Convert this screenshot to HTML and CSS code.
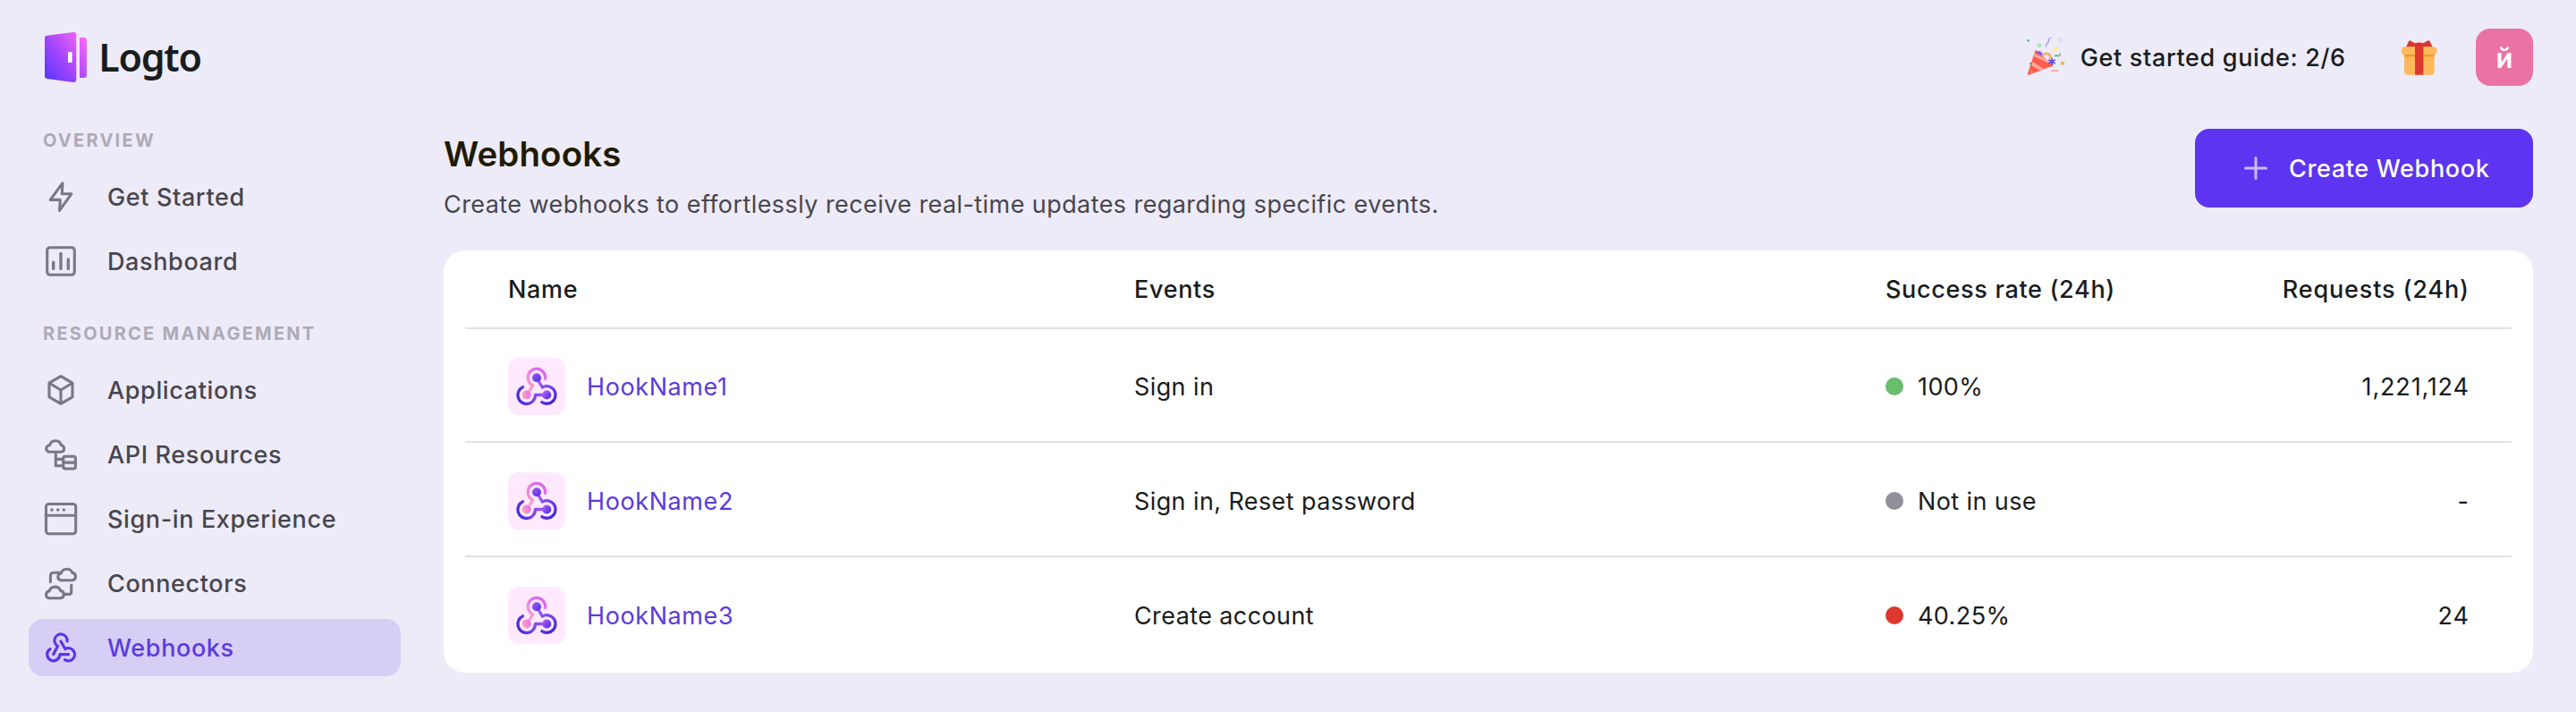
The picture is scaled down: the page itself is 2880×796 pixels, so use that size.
FILE: index.html
```html
<!DOCTYPE html>
<html lang="en">
<head>
<meta charset="utf-8">
<title>Logto – Webhooks</title>
<link rel="stylesheet" href="styles.css">
</head>
<body>
<svg class="defs" width="0" height="0" aria-hidden="true">
  <defs>
    <linearGradient id="hookPink" gradientUnits="userSpaceOnUse" x1="42" y1="14" x2="24" y2="40"><stop offset="0" stop-color="#d75ff0"/><stop offset=".5" stop-color="#ec86dd"/><stop offset="1" stop-color="#ffa8b8"/></linearGradient>
    <linearGradient id="hookLeft" gradientUnits="userSpaceOnUse" x1="12" y1="46" x2="42" y2="38"><stop offset="0" stop-color="#4a2bdc"/><stop offset="1" stop-color="#a85df2"/></linearGradient>
    <linearGradient id="hookRight" gradientUnits="userSpaceOnUse" x1="52" y1="48" x2="34" y2="26"><stop offset="0" stop-color="#4526d6"/><stop offset="1" stop-color="#a35cf0"/></linearGradient>
    <linearGradient id="dotTop" x1="0" y1="0" x2="1" y2="1"><stop offset="0" stop-color="#a25af5"/><stop offset="1" stop-color="#5130ea"/></linearGradient>
    <linearGradient id="dotLeft" x1="0" y1=".7" x2="1" y2=".3"><stop offset="0" stop-color="#ffa7b4"/><stop offset="1" stop-color="#e76bf0"/></linearGradient>
    <linearGradient id="dotRight" x1="0" y1="0" x2="1" y2="1"><stop offset="0" stop-color="#b765f7"/><stop offset="1" stop-color="#4a2be0"/></linearGradient>
    <symbol id="hook" viewBox="0 0 64 64">
      <g fill="none" stroke-width="3.3" stroke-linecap="round" stroke-linejoin="round">
        <path stroke="url(#hookPink)" d="M41.6 23.6A9.8 9.8 0 1 0 27.6 31L22.5 39.5"/>
        <path stroke="url(#hookLeft)" d="M16.6 32.8A9.8 9.8 0 1 0 30.5 41.5H41"/>
        <path stroke="url(#hookRight)" d="M37.8 49.6A9.8 9.8 0 1 0 38.3 33L33 24"/>
      </g>
      <circle cx="32" cy="22.3" r="5" fill="url(#dotTop)"/>
      <circle cx="20.7" cy="41.5" r="5" fill="url(#dotLeft)"/>
      <circle cx="43.3" cy="41.5" r="5" fill="url(#dotRight)"/>
    </symbol>
  </defs>
</svg>

<header class="topbar">
  <a class="logo">
    <svg class="logo-mark" viewBox="0 0 142 168">
      <defs><linearGradient id="door" gradientUnits="userSpaceOnUse" x1="0" y1="140" x2="140" y2="34"><stop offset="0" stop-color="#6038ff"/><stop offset=".45" stop-color="#a446fb"/><stop offset="1" stop-color="#f566f5"/></linearGradient></defs>
      <path fill="url(#door)" d="M7 11L96 0Q106-1 106 9V159Q106 169 96 168L7 156Q0 155 0 148V19Q0 12 7 11Z"/>
      <path fill="#fff" d="M80 66H90Q92 66 92 68V100Q92 102 90 102H80Q78 102 78 100V68Q78 66 80 66Z"/>
      <path fill="url(#door)" d="M117 18H132Q141 18 141 27V144Q141 153 132 153H117Z"/>
    </svg>
    <span class="logo-text">Logto</span>
  </a>
  <div class="actions">
    <svg class="party" viewBox="45 25 135 140">
      <path fill="#ff5c4d" d="M77 75L138 128L56 159Q50 160 51 154Z"/>
      <g fill="#ffa79c"><path d="M74 86L136 119L138 128L128 132L71 101Z"/><path d="M67 115L106 140L94 145L64 128Z"/><path d="M59 142L75 152L67 155L56 156Z" opacity=".35"/></g>
      <path fill="#ff5c4d" d="M71 97L130 124L133 130L126 133L69 108Z"/>
      <path fill="none" stroke="#f9b25c" stroke-width="8" d="M103 94Q108 86 118 88Q129 92 127 105"/>
      <path fill="#7a5cf0" d="M82 79Q98 77 103 94Q92 93 82 84Z"/>
      <path stroke="#5f48e8" stroke-width="5" d="M132 102V127M121 108L143 121M143 108L121 121"/>
      <path fill="none" stroke="#a79cf8" stroke-width="4" d="M130 35Q120 36 121 46Q122 52 116 53Q111 56 113 65"/>
      <path fill="none" stroke="#4caf5c" stroke-width="4" d="M141 97Q147 92 151 95Q158 98 161 87"/>
      <path fill="none" stroke="#f58c7c" stroke-width="3.5" d="M131 148Q136 140 141 146Q147 140 153 148"/>
      <circle cx="90" cy="60" r="5" fill="none" stroke="#6fdc83" stroke-width="3"/>
      <circle cx="162" cy="42" r="5" fill="none" stroke="#c8c6d4" stroke-width="2.5"/>
      <circle cx="53" cy="44" r="4" fill="#4fb467"/><circle cx="61" cy="122" r="4" fill="#5bb36a"/>
      <circle cx="144" cy="72" r="6.5" fill="#fff07a"/><circle cx="168" cy="120" r="6.5" fill="#fdae4b"/>
    </svg>
    <span class="guide">Get started guide: 2/6</span>
    <svg class="gift" viewBox="70 55 124 122">
      <path fill="#d9362f" d="M88 81L97 61Q100 57 105 61L118 68Q131 63 146 68L159 60Q165 57 168 61L177 81Z"/>
      <path fill="#ffb95c" d="M82 104H183V162Q183 174 171 174H94Q82 174 82 162Z"/>
      <rect x="72" y="80" width="120" height="28" rx="13" fill="#ffb95c"/>
      <path fill="#eb9918" d="M82 107H183V113H82Z"/>
      <path fill="#de3730" d="M118 74H146V174H118Z"/>
    </svg>
    <div class="avatar">й</div>
  </div>
</header>

<div class="layout">
  <nav class="sidebar">
    <div class="section">
      <div class="label">OVERVIEW</div>
      <a class="item"><svg viewBox="0 0 40 40"><path d="M22 4.7L8.3 23.4H19.3L18.5 35.4L31.8 16.8H21.3Z"/></svg><span>Get Started</span></a>
      <a class="item"><svg viewBox="0 0 40 40"><rect x="4.7" y="4.7" width="30.6" height="30.6" rx="3.2"/><path class="bars" d="M11.7 21.3V28.4M20 11.5V28.4M28.3 18V28.4"/></svg><span>Dashboard</span></a>
    </div>
    <div class="section">
      <div class="label">RESOURCE MANAGEMENT</div>
      <a class="item"><svg viewBox="0 0 40 40"><path d="M20 4.7L33 12.2V27.8L20 35.4L7 27.8V12.2ZM7.5 12.5L20 20L32.5 12.5M20 20V35"/></svg><span>Applications</span></a>
      <a class="item"><svg viewBox="0 0 40 40"><path d="M7.5 17.3A3.8 3.8 0 0 1 7.6 9.7A6.6 6.6 0 0 1 20.4 9.7A3.9 3.9 0 0 1 20.8 17.3ZM14.3 17.3V32.7H22M14.3 25.4H22"/><rect x="22.8" y="22.2" width="13.6" height="13.8" rx="2"/><path d="M22.8 29.1H36.4"/></svg><span>API Resources</span></a>
      <a class="item"><svg viewBox="0 0 40 40"><rect x="3.5" y="3.5" width="33.2" height="33.2" rx="3"/><path d="M3.5 16.3H36.7"/><g class="dots"><circle cx="10" cy="10" r="1.8"/><circle cx="16.8" cy="10" r="1.8"/><circle cx="23.4" cy="10" r="1.8"/></g></svg><span>Sign-in Experience</span></a>
      <a class="item"><svg viewBox="0 0 40 40"><path d="M20 16.7A3.9 3.9 0 0 1 20.3 9A6.7 6.7 0 0 1 32.9 8.4A4.2 4.2 0 0 1 33 16.7ZM19.5 8.2H12Q8.4 8.2 8.4 11.8V18.6M6.7 36.7A3.9 3.9 0 0 1 7 29A6.7 6.7 0 0 1 19.7 28.4A4.2 4.2 0 0 1 19.8 36.7ZM31.8 22V29.8Q31.8 32.4 29.2 32.4H24.5"/></svg><span>Connectors</span></a>
      <a class="item active"><svg viewBox="0 0 40 40"><path d="M27.1 12.8A7.1 7.1 0 1 0 16.6 18.3L11.7 27.4M8 21.6A7.1 7.1 0 1 0 18.9 27.7H28.6M24.5 33.6A7.1 7.1 0 1 0 24.9 21.5L20 13"/></svg><span>Webhooks</span></a>
    </div>
  </nav>

  <main class="content">
    <div class="page-head">
      <div>
        <h1>Webhooks</h1>
        <p>Create webhooks to effortlessly receive real-time updates regarding specific events.</p>
      </div>
      <button class="create"><svg viewBox="0 0 26 26"><path d="M13 1.5V24.5M1.5 13H24.5"/></svg><span>Create Webhook</span></button>
    </div>
    <section class="card">
      <div class="row head"><span>Name</span><span>Events</span><span>Success rate (24h)</span><span class="num">Requests (24h)</span></div>
      <div class="row first">
        <div class="name"><svg class="hook"><use href="#hook"/></svg><span>HookName1</span></div><span>Sign in</span>
        <div class="status"><i class="dot green"></i><span>100%</span></div><span class="num">1,221,124</span>
      </div>
      <div class="row">
        <div class="name"><svg class="hook"><use href="#hook"/></svg><span>HookName2</span></div><span>Sign in, Reset password</span>
        <div class="status"><i class="dot gray"></i><span>Not in use</span></div><span class="num">-</span>
      </div>
      <div class="row last">
        <div class="name"><svg class="hook"><use href="#hook"/></svg><span>HookName3</span></div><span>Create account</span>
        <div class="status"><i class="dot red"></i><span>40.25%</span></div><span class="num">24</span>
      </div>
    </section>
  </main>
</div>
</body>
</html>
```

FILE: styles.css
```css
* { box-sizing: border-box; }
body {
  margin: 0;
  height: 796px;
  overflow: hidden;
  background: #eeebf8;
  color: #191c1d;
  font-family: Inter, "Liberation Sans", sans-serif;
  font-size: 27px;
  line-height: 40px;
  letter-spacing: 0.4px;
}
svg { display: block; flex: none; }
.defs { position: absolute; }

.topbar {
  height: 128px;
  padding: 0 48px 0 50px;
  display: flex;
  align-items: center;
  justify-content: space-between;
}
.logo { display: flex; align-items: center; gap: 13px; }
.logo-mark { width: 47.3px; height: 56px; overflow: visible; }
.logo-text {
  font-family: "Noto Sans", sans-serif;
  font-weight: 600;
  font-size: 43px;
  line-height: 56px;
  letter-spacing: -1.3px;
}
.actions { display: flex; align-items: center; }
.party { width: 45px; height: 46.7px; margin: 0 16px 4px 0; }
.guide { width: 298px; padding-top: 2px; font-weight: 500; letter-spacing: 0.66px; white-space: nowrap; }
.gift { width: 41.3px; height: 40.7px; margin-left: 60px; }
.avatar {
  width: 64px;
  height: 64px;
  margin-left: 43px;
  padding-top: 1px;
  border-radius: 16px;
  background: #eb73a3;
  color: #fff;
  font-size: 31px;
  font-weight: 600;
  line-height: 64px;
  letter-spacing: 0;
  text-align: center;
}

.layout { display: flex; }
.sidebar { width: 448px; padding: 13px 0 0 32px; flex: none; }
.section { display: flex; flex-direction: column; gap: 8px; margin-bottom: 33px; }
.label {
  height: 32px;
  margin-bottom: 7px;
  padding-left: 16px;
  color: #adaab6;
  font-size: 20px;
  font-weight: 650;
  line-height: 32px;
  letter-spacing: 2.25px;
  white-space: nowrap;
}
.item {
  height: 64px;
  padding-left: 16px;
  border-radius: 16px;
  display: flex;
  align-items: center;
  gap: 32px;
  color: #47464e;
  font-weight: 500;
  letter-spacing: 0.62px;
}
.item span, .row span, .create span { padding-top: 2px; }
.item svg {
  width: 40px;
  height: 40px;
  fill: none;
  stroke: #7b7885;
  stroke-width: 3.1;
  stroke-linecap: round;
  stroke-linejoin: round;
}
.item .bars { stroke-width: 3.4; }
.item .dots { fill: #7b7885; stroke: none; }
.item.active { background: #d7cef5; color: #5b3be0; }
.item.active svg { stroke: #5d34e8; stroke-width: 3.2; }

.content { flex: 1; padding: 16px 48px 0; }
.page-head { height: 136px; display: flex; justify-content: space-between; }
h1 {
  margin: 4px 0 0;
  color: #1f1b02;
  font-size: 38.5px;
  font-weight: 600;
  line-height: 48px;
  letter-spacing: 0.1px;
}
p { margin: 13px 0 0; color: #47464e; letter-spacing: 0.42px; white-space: nowrap; }
.create {
  width: 378px;
  height: 88px;
  padding: 0 0 0 55px;
  border: 0;
  border-radius: 16px;
  background: #5d34f0;
  color: #fff;
  font: 500 27px/40px Inter, "Liberation Sans", sans-serif;
  letter-spacing: 0.65px;
  display: flex;
  align-items: center;
  gap: 24px;
  white-space: nowrap;
}
.create svg { width: 26px; height: 26px; fill: none; stroke: #c9bcff; stroke-width: 3; stroke-linecap: round; }

.card { height: 472px; padding: 0 24px; border-radius: 24px; background: #fff; }
.row {
  height: 128px;
  padding: 4px 48px 0;
  border-bottom: 2px solid #e0e2e3;
  display: grid;
  grid-template-columns: 700px 840px 1fr auto;
  align-items: center;
}
.head { height: 88px; padding-top: 0; font-weight: 500; letter-spacing: 0.68px; }
.first { height: 127px; padding-top: 3px; }
.last { border-color: transparent; }
.name { display: flex; align-items: center; gap: 24px; color: #5b3bdc; letter-spacing: 0.6px; }
.hook { width: 64px; height: 64px; border-radius: 12px; background: #fee9fe; }
.status { display: flex; align-items: center; gap: 16px; }
.dot { width: 20px; height: 20px; border-radius: 50%; }
.green { background: #68be6c; }
.gray { background: #938f9a; }
.red { background: #dd372f; }
.num { margin-right: -0.8px; text-align: right; letter-spacing: 0.85px; }
```
